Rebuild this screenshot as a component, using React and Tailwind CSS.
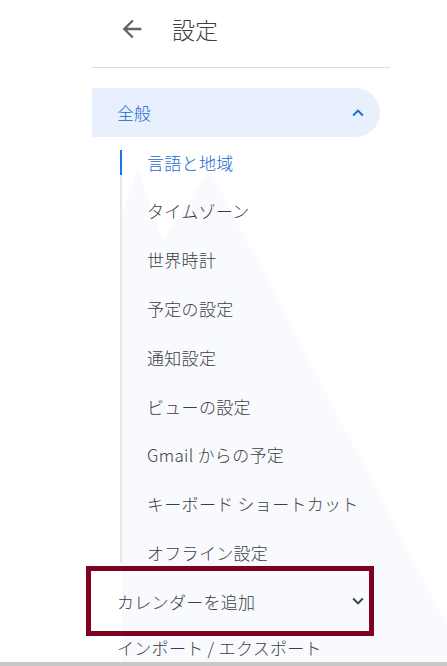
import React from "react";

const items = [
  "言語と地域",
  "タイムゾーン",
  "世界時計",
  "予定の設定",
  "通知設定",
  "ビューの設定",
  "Gmail からの予定",
  "キーボード ショートカット",
  "オフライン設定",
];

const font = { fontFamily: "'Noto Sans CJK JP', 'Noto Sans', sans-serif" };

export default function App() {
  return (
    <div
      className="relative w-[447px] h-[666px] overflow-hidden bg-white text-[#3c4043] font-light"
      style={font}
    >
      <svg
        className="absolute inset-0 pointer-events-none"
        width="447"
        height="666"
        viewBox="0 0 447 666"
      >
        <polygon
          points="122,666 122,215 138,170 163,240 210,170 447,625 447,666"
          fill="#f9fafd"
        />
      </svg>
      <div className="relative flex flex-col">
        {/* header */}
        <div className="ml-[92px] w-[298px] h-[68px] pb-[9px] flex items-center border-b border-[#dadce0]">
          <svg className="ml-[26px] w-[28px] h-[28px]" viewBox="0 0 24 24" fill="#5f6368">
            <path d="M20 11H7.83l5.59-5.59L12 4l-8 8 8 8 1.41-1.41L7.83 13H20v-2z" />
          </svg>
          <span className="ml-[26px] text-[23px] leading-none text-[#3c4043]">設定</span>
        </div>

        {/* 全般 pill */}
        <div className="mt-[20px] ml-[92px] w-[288px] h-[49px] rounded-r-full bg-[#e8f0fe] flex items-center justify-between pl-[25px] pr-[11px]">
          <span className="text-[17px] text-[#1967d2] leading-none">全般</span>
          <svg className="w-[22px] h-[22px]" viewBox="0 0 24 24" fill="#1967d2">
            <path d="M12 8l-6 6 1.41 1.41L12 10.83l4.59 4.58L18 14z" />
          </svg>
        </div>

        {/* sub list */}
        <div className="ml-[120px] mt-[13px] h-[413px] border-l-2 border-[#e6e8eb]">
          <div className="-mt-[12px] flex flex-col">
            {items.map((t, i) => (
              <div
                key={t}
                className={
                  i === 0
                    ? "relative h-[48.8px] flex items-center pl-[25px] text-[17px] tracking-[0.3px] text-[#1967d2] whitespace-nowrap"
                    : "h-[48.8px] flex items-center pl-[25px] text-[17px] tracking-[0.3px] text-[#3c4043] whitespace-nowrap"
                }
              >
                {i === 0 && (
                  <span className="absolute -left-[2px] top-[12px] h-[25px] w-[2px] bg-[#1a73e8]" />
                )}
                {t}
              </div>
            ))}
          </div>
        </div>

        {/* highlighted box */}
        <div className="mt-[3px] ml-[86px] w-[288px] h-[70px] border-[5px] border-[#7f0020] flex items-center justify-between pl-[26px]">
          <span className="text-[17px] tracking-[0.3px] leading-none text-[#3c4043]">カレンダーを追加</span>
          <svg className="w-[22px] h-[22px]" viewBox="0 0 24 24" fill="#3c4043">
            <path d="M16.59 8.59L12 13.17 7.41 8.59 6 10l6 6 6-6z" />
          </svg>
        </div>

        <div className="ml-[117px] h-[24px] flex items-center text-[17px] tracking-[0.3px] text-[#3c4043] whitespace-nowrap">
          インポート / エクスポート
        </div>
        <div className="mt-[2px] h-[4px] bg-[#c8c8c8]" />
      </div>
    </div>
  );
}
